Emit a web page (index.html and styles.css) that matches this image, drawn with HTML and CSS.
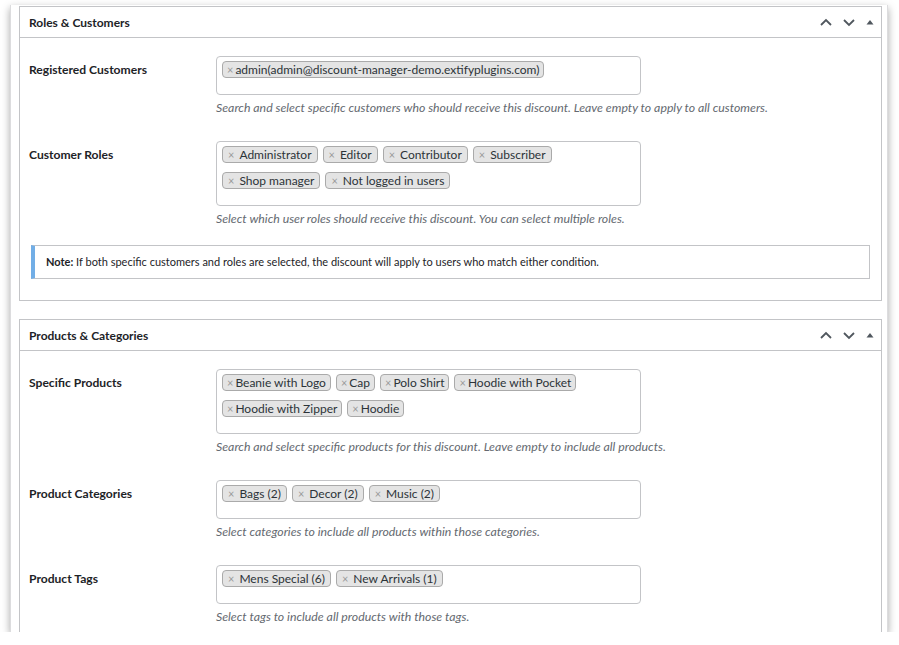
FILE: index.html
```html
<!DOCTYPE html>
<html lang="en">
<head>
    <meta charset="UTF-8">
    <meta name="viewport" content="width=device-width, initial-scale=1.0">
    <title>Discount rules</title>
    <link rel="stylesheet" href="styles.css">
</head>
<body>
    <div id="frame">
        <!-- Roles & Customers -->
        <div class="postbox">
            <div class="postbox-header">
                <h2>Roles &amp; Customers</h2>
                <div class="handle-actions">
                    <svg class="handle" viewBox="0 0 14 14"><path d="M2 10 L7 5 L12 10" /></svg>
                    <svg class="handle" viewBox="0 0 14 14"><path d="M2 5 L7 10 L12 5" /></svg>
                    <svg class="toggle" viewBox="0 0 10 10"><path d="M1.5 7.5 L5 3 L8.5 7.5 Z" /></svg>
                </div>
            </div>
            <div class="inside">
                <div class="field-row">
                    <label>Registered Customers</label>
                    <div class="field">
                        <ul class="select-box">
                            <li class="tag tight"><span class="x">×</span>admin(admin@discount-manager-demo.extifyplugins.com)</li>
                        </ul>
                        <p class="description">Search and select specific customers who should receive this discount. Leave empty to apply to all customers.</p>
                    </div>
                </div>
                <div class="field-row">
                    <label>Customer Roles</label>
                    <div class="field">
                        <ul class="select-box">
                            <li class="tag"><span class="x">×</span>Administrator</li>
                            <li class="tag"><span class="x">×</span>Editor</li>
                            <li class="tag"><span class="x">×</span>Contributor</li>
                            <li class="tag"><span class="x">×</span>Subscriber</li>
                            <li class="tag"><span class="x">×</span>Shop manager</li>
                            <li class="tag"><span class="x">×</span>Not logged in users</li>
                        </ul>
                        <p class="description">Select which user roles should receive this discount. You can select multiple roles.</p>
                    </div>
                </div>
                <div class="notice">
                    <strong>Note:</strong> If both specific customers and roles are selected, the discount will apply to users who match either condition.
                </div>
            </div>
        </div>

        <!-- Products & Categories -->
        <div class="postbox">
            <div class="postbox-header">
                <h2>Products &amp; Categories</h2>
                <div class="handle-actions">
                    <svg class="handle" viewBox="0 0 14 14"><path d="M2 10 L7 5 L12 10" /></svg>
                    <svg class="handle" viewBox="0 0 14 14"><path d="M2 5 L7 10 L12 5" /></svg>
                    <svg class="toggle" viewBox="0 0 10 10"><path d="M1.5 7.5 L5 3 L8.5 7.5 Z" /></svg>
                </div>
            </div>
            <div class="inside">
                <div class="field-row">
                    <label>Specific Products</label>
                    <div class="field">
                        <ul class="select-box">
                            <li class="tag tight"><span class="x">×</span>Beanie with Logo</li>
                            <li class="tag tight"><span class="x">×</span>Cap</li>
                            <li class="tag tight"><span class="x">×</span>Polo Shirt</li>
                            <li class="tag tight"><span class="x">×</span>Hoodie with Pocket</li>
                            <li class="tag tight"><span class="x">×</span>Hoodie with Zipper</li>
                            <li class="tag tight"><span class="x">×</span>Hoodie</li>
                        </ul>
                        <p class="description">Search and select specific products for this discount. Leave empty to include all products.</p>
                    </div>
                </div>
                <div class="field-row">
                    <label>Product Categories</label>
                    <div class="field">
                        <ul class="select-box">
                            <li class="tag"><span class="x">×</span>Bags (2)</li>
                            <li class="tag"><span class="x">×</span>Decor (2)</li>
                            <li class="tag"><span class="x">×</span>Music (2)</li>
                        </ul>
                        <p class="description">Select categories to include all products within those categories.</p>
                    </div>
                </div>
                <div class="field-row">
                    <label>Product Tags</label>
                    <div class="field">
                        <ul class="select-box">
                            <li class="tag"><span class="x">×</span>Mens Special (6)</li>
                            <li class="tag"><span class="x">×</span>New Arrivals (1)</li>
                        </ul>
                        <p class="description">Select tags to include all products with those tags.</p>
                    </div>
                </div>
            </div>
        </div>
    </div>
</body>
</html>
```

FILE: styles.css
```css
* {
    margin: 0;
    padding: 0;
    box-sizing: border-box;
}

li {
    list-style: none;
}

body {
    background: #ffffff;
    font-family: "Lato", "Liberation Sans", sans-serif;
    color: #1d2327;
}

#frame {
    width: 878px;
    height: 627px;
    margin: 5px 0 0 10px;
    padding: 1px 5px 0 8px;
    background: #ffffff;
    border-left: 1px solid #dcdcde;
    border-right: 1px solid #dcdcde;
    overflow: hidden;
    box-shadow: 0 3px 8px rgba(0, 0, 0, 0.35);
}

.postbox {
    border: 1px solid #c3c4c7;
    background: #ffffff;
    margin-bottom: 18px;
}

.postbox-header {
    display: flex;
    align-items: center;
    justify-content: space-between;
    height: 31px;
    border-bottom: 1px solid #c3c4c7;
    padding: 0 6px 0 9px;
}

.postbox-header h2 {
    font-size: 12px;
    font-weight: 700;
}

.handle-actions {
    display: flex;
    align-items: center;
    gap: 9px;
}

.handle {
    width: 14px;
    height: 14px;
    fill: none;
    stroke: #50575e;
    stroke-width: 1.8;
}

.toggle {
    width: 10px;
    height: 10px;
    fill: #50575e;
}

.inside {
    padding: 18px 11px 21px 9px;
}

.field-row {
    display: flex;
    margin-bottom: 25px;
}

.field-row label {
    width: 187px;
    flex-shrink: 0;
    font-size: 12.1px;
    font-weight: 700;
    padding-top: 6px;
}

.field {
    flex: 1;
}

.select-box {
    display: flex;
    flex-wrap: wrap;
    row-gap: 9px;
    width: 425px;
    border: 1px solid #c3c4c7;
    border-radius: 4px;
    padding: 4px 5px 16px;
}

.tag {
    height: 17px;
    line-height: 15px;
    font-size: 12px;
    padding: 0 5px;
    margin-right: 5px;
    background: #e4e4e4;
    border: 1px solid #aaaaaa;
    border-radius: 4px;
    color: #2c3338;
}

.tag .x {
    color: #999999;
    font-size: 11px;
    margin-right: 5px;
}

.tag.tight {
    padding: 0 4px;
}

.tag.tight .x {
    margin-right: 2px;
}

.description {
    margin-top: 4px;
    font-size: 12.3px;
    font-style: italic;
    line-height: 17px;
    white-space: nowrap;
    color: #646970;
}

.notice {
    margin: -7px 0 0 2px;
    border: 1px solid #c3c4c7;
    border-left: 4px solid #72aee6;
    padding: 9px 11px;
    font-size: 11px;
    line-height: 14px;
    color: #1d2327;
}
```
